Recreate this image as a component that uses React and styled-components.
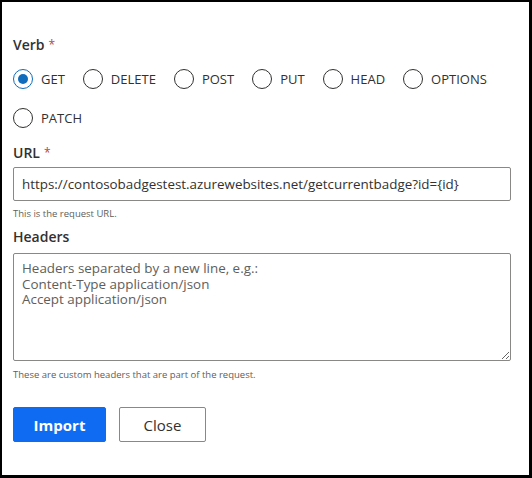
import React from "react";
import styled, { createGlobalStyle } from "styled-components";

const GlobalStyle = createGlobalStyle`
  html, body {
    margin: 0;
    padding: 0;
    background: #ffffff;
  }
  body {
    font-family: "Open Sans", "Noto Sans", "Liberation Sans", sans-serif;
    color: #323130;
  }
`;

const Frame = styled.div`
  box-sizing: border-box;
  width: 532px;
  height: 478px;
  border-style: solid;
  border-color: #000000;
  border-width: 2px 3px 3px 2px;
  background: #ffffff;
  padding: 33px 20px 0 11px;
  display: flex;
  flex-direction: column;
`;

const Label = styled.div`
  font-size: 14px;
  font-weight: 600;
  line-height: 20px;
  color: #323130;
  margin-top: ${props => props.top || 0}px;

  span {
    color: #b4474c;
    font-size: 12px;
    font-weight: 400;
    margin-left: 4px;
    vertical-align: 1px;
  }
`;

const RadioGroup = styled.div`
  display: flex;
  flex-wrap: wrap;
  column-gap: 18px;
  row-gap: 19px;
  margin-top: 14px;
`;

const RadioItem = styled.label`
  display: flex;
  align-items: center;
  gap: 8px;
  height: 20px;
  font-size: 13px;
  color: #323130;
  cursor: pointer;
`;

const Circle = styled.span`
  box-sizing: border-box;
  width: 20px;
  height: 20px;
  border-radius: 50%;
  border: 1px solid ${props => (props.checked ? "#0f6cbd" : "#323130")};
  display: flex;
  align-items: center;
  justify-content: center;

  &::after {
    content: "";
    width: 10px;
    height: 10px;
    border-radius: 50%;
    background: ${props => (props.checked ? "#0f6cbd" : "transparent")};
  }
`;

const TextInput = styled.input`
  box-sizing: border-box;
  width: 498px;
  height: 34px;
  margin-top: 4px;
  padding: 0 8px;
  border: 1px solid #8a8886;
  border-radius: 2px;
  font-family: "Open Sans", "Noto Sans", sans-serif;
  font-size: 13.4px;
  color: #323130;
  outline: none;
`;

const Hint = styled.div`
  font-size: 9.5px;
  line-height: 14px;
  color: #605e5c;
  margin-top: ${props => props.top || 6}px;
`;

const TextArea = styled.textarea`
  box-sizing: border-box;
  width: 498px;
  height: 108px;
  margin-top: 6px;
  padding: 7px 8px;
  border: 1px solid #8a8886;
  border-radius: 2px;
  font-family: "Open Sans", "Noto Sans", sans-serif;
  font-size: 13.4px;
  line-height: 15.5px;
  color: #323130;
  outline: none;
  resize: vertical;

  &::placeholder {
    color: #605e5c;
    opacity: 1;
  }
`;

const Actions = styled.div`
  display: flex;
  gap: 13px;
  margin-top: 25px;
`;

const Button = styled.button`
  box-sizing: border-box;
  height: 35px;
  width: ${props => props.width}px;
  border-radius: 2px;
  font-family: "Open Sans", "Noto Sans", sans-serif;
  font-size: 15px;
  font-weight: ${props => (props.primary ? 700 : 400)};
  color: ${props => (props.primary ? "#ffffff" : "#323130")};
  background: ${props => (props.primary ? "#0f6cf2" : "#ffffff")};
  border: 1px solid ${props => (props.primary ? "#0f6cf2" : "#8a8886")};
  cursor: pointer;
`;

const verbs = ["GET", "DELETE", "POST", "PUT", "HEAD", "OPTIONS", "PATCH"];

const App = () => (
  <>
    <GlobalStyle />
    <Frame>
      <Label>
        Verb<span>*</span>
      </Label>
      <RadioGroup>
        {verbs.map(verb => (
          <RadioItem key={verb}>
            <Circle checked={verb === "GET"} />
            {verb}
          </RadioItem>
        ))}
      </RadioGroup>
      <Label top={15}>
        URL<span>*</span>
      </Label>
      <TextInput
        readOnly
        value="https://contosobadgestest.azurewebsites.net/getcurrentbadge?id={id}"
      />
      <Hint>This is the request URL.</Hint>
      <Label top={6}>Headers</Label>
      <TextArea
        placeholder={
          "Headers separated by a new line, e.g.:\nContent-Type application/json\nAccept application/json"
        }
      />
      <Hint top={7}>These are custom headers that are part of the request.</Hint>
      <Actions>
        <Button primary width={93}>
          Import
        </Button>
        <Button width={87}>Close</Button>
      </Actions>
    </Frame>
  </>
);

export default App;
